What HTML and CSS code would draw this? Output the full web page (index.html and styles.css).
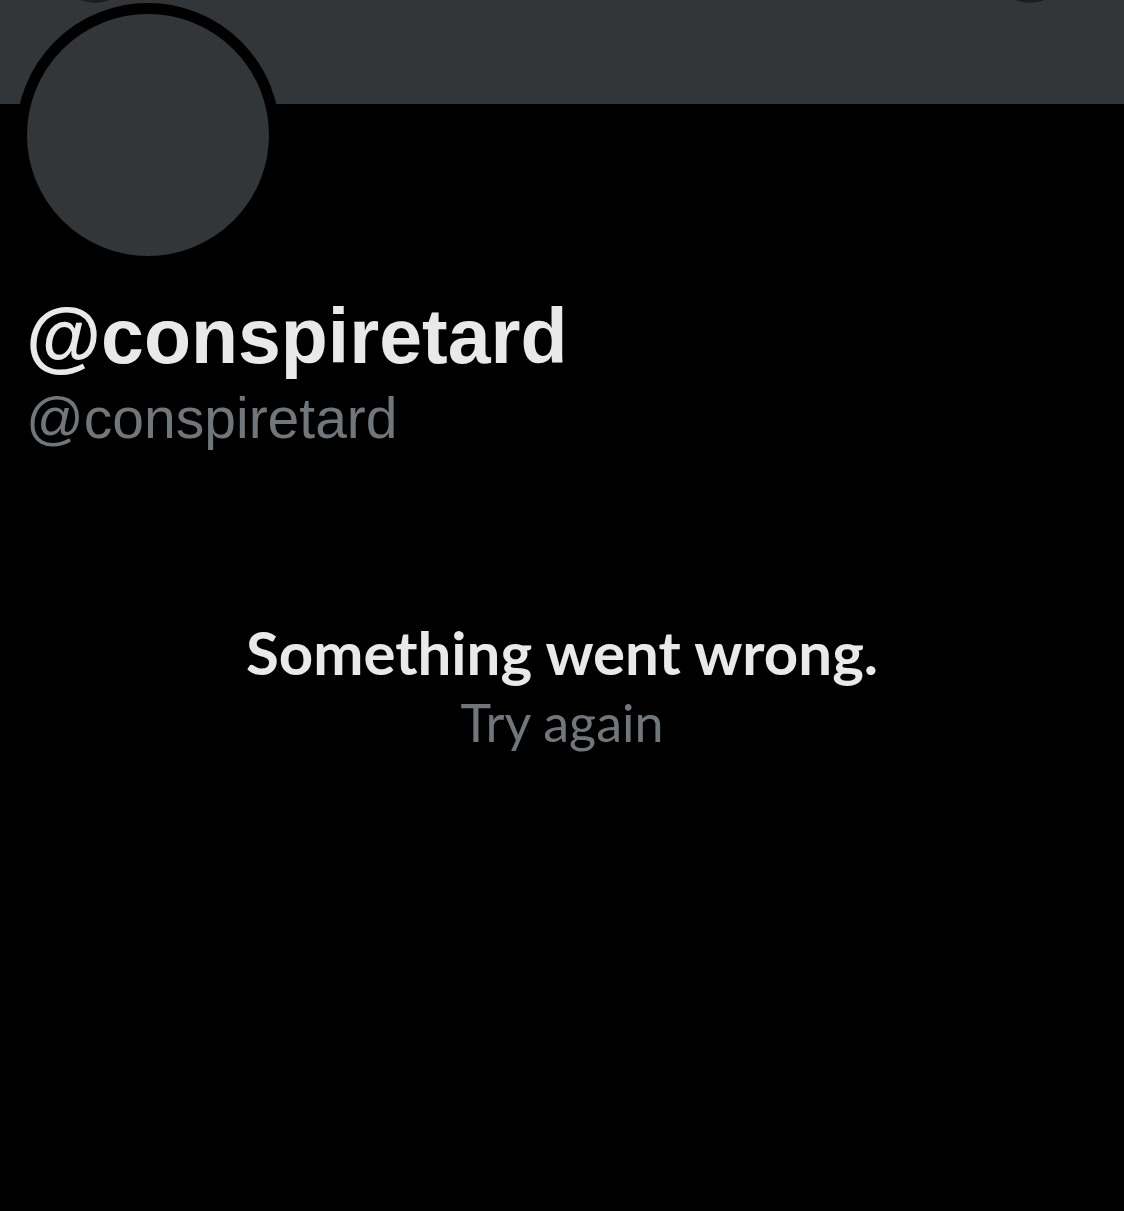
FILE: index.html
```html
<!DOCTYPE html>
<html lang="en">
<head>
    <meta charset="UTF-8">
    <meta name="viewport" content="width=device-width, initial-scale=1.0">

    <title>@conspiretard</title>

    <link rel="stylesheet" href="styles.css">

</head>

<body>

    <div class="banner">
        <!-- nav buttons sit mostly above the visible area -->
        <span class="nav-btn back"></span>
        <span class="nav-btn more"></span>
    </div>

    <div class="profile">
        <div class="avatar"></div>
        <h1 class="name">@conspiretard</h1>
        <div class="handle">@conspiretard</div>
    </div>

    <div class="error">
        <div class="error-title">Something went wrong.</div>
        <div class="error-retry">Try again</div>
    </div>

</body>

</html>
```

FILE: styles.css
```css
body {
    margin: 0;
    background-color: #000000;
    color: #e7e9ea;
    font-family: 'Liberation Sans', Arial, sans-serif;
}

.banner {
    position: relative;
    height: 104px;
    background-color: #333639;
    overflow: hidden;
}

.nav-btn {
    position: absolute;
    top: -69px;
    width: 72px;
    height: 72px;
    border-radius: 50%;
    background-color: #1c1d20;
}

.nav-btn.back {
    left: 59px;
}

.nav-btn.more {
    left: 994px;
}

.profile {
    padding-left: 16px;
}

/* relative so it paints over the banner */
.avatar {
    position: relative;
    width: 242px;
    height: 242px;
    margin-top: -101px;
    border: 11px solid #000000;
    border-radius: 50%;
    background-color: #333639;
}

.name {
    margin: 24px 0 0 10px;
    font-size: 77px;
    line-height: 90px;
    font-weight: bold;
    color: #e7e9ea;
}

.handle {
    margin: 5px 0 0 10px;
    font-size: 57px;
    line-height: 64px;
    color: #71767b;
}

.error {
    margin-top: 170px;
    display: flex;
    flex-direction: column;
    align-items: center;
    font-family: Lato, 'Open Sans', sans-serif;
}

.error-title {
    font-size: 60px;
    line-height: 64px;
    font-weight: bold;
    color: #e7e9ea;
}

.error-retry {
    margin-top: 6px;
    font-size: 52px;
    line-height: 64px;
    color: #71767b;
}
```
